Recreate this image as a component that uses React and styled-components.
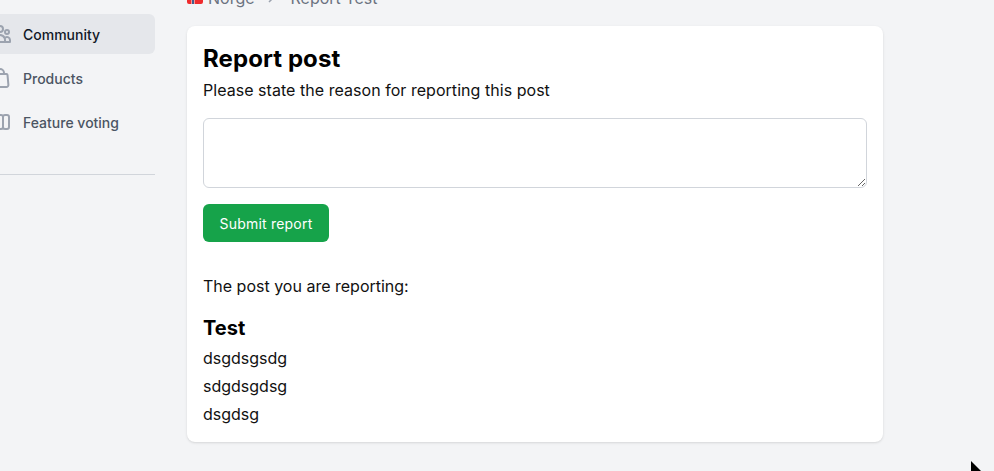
import React from 'react'
import styled, { createGlobalStyle } from 'styled-components'

const GlobalStyle = createGlobalStyle`
  html, body {
    margin: 0;
    padding: 0;
    height: 100%;
    overflow: hidden;
    background: #f3f4f6;
    font-family: Inter, "Liberation Sans", sans-serif;
  }
`

const Page = styled.div`
  display: flex;
  align-items: flex-start;
  width: 1010px;
  height: 471px;
  margin-left: -16px;
  overflow: hidden;
`

const Sidebar = styled.nav`
  flex: none;
  width: 171px;
  margin-top: 14px;
`

const NavItem = styled.a`
  display: flex;
  align-items: center;
  gap: 11px;
  height: 40px;
  padding-left: 4px;
  margin-bottom: 4px;
  box-sizing: border-box;
  border-radius: 6px;
  font-size: 14px;
  font-weight: 500;
  color: ${p => (p.$active ? '#111827' : '#4b5563')};
  background: ${p => (p.$active ? '#e5e7eb' : 'transparent')};
  svg {
    flex: none;
    width: 24px;
    height: 24px;
    fill: none;
    stroke: #9ca3af;
    stroke-width: 2;
    stroke-linecap: round;
    stroke-linejoin: round;
  }
`

const Divider = styled.div`
  height: 1px;
  margin-top: 32px;
  background: #d1d5db;
`

const Main = styled.main`
  flex: none;
  width: 696px;
  margin-left: 32px;
  margin-top: -12px;
`

const Breadcrumb = styled.div`
  display: flex;
  align-items: center;
  height: 20px;
  margin-bottom: 18px;
  font-size: 16px;
  color: #6b7280;
`

const Flag = styled.svg`
  width: 16px;
  height: 12px;
  margin-right: 5px;
  border-radius: 2px;
`

const Chevron = styled.svg`
  width: 10px;
  height: 10px;
  margin: 0 15px 0 11px;
  fill: none;
  stroke: #9ca3af;
  stroke-width: 1.5;
`

const Card = styled.section`
  box-sizing: border-box;
  height: 416px;
  padding: 17px 16px 16px;
  background: #fff;
  border-radius: 8px;
  box-shadow: 0 1px 3px rgba(0, 0, 0, 0.1), 0 1px 2px -1px rgba(0, 0, 0, 0.1);
`

const Title = styled.h1`
  margin: 0 0 1px;
  font-size: 24px;
  line-height: 32px;
  font-weight: 700;
  letter-spacing: 0.08px;
  color: #000;
`

const Text = styled.p`
  margin: 0;
  font-size: 16px;
  line-height: 28px;
  letter-spacing: ${p => p.$spacing || 0};
  color: #111;
`

const ReasonInput = styled.textarea`
  display: block;
  box-sizing: border-box;
  width: 100%;
  height: 70px;
  margin-top: 14px;
  padding: 8px 12px;
  background: #fff;
  border: 1px solid #d1d5db;
  border-radius: 6px;
  outline: none;
  font: inherit;
`

const SubmitButton = styled.button`
  display: block;
  width: 126px;
  height: 38px;
  margin: 16px 0 30px;
  padding: 0;
  border: 0;
  border-radius: 6px;
  background: #16a34a;
  color: #fff;
  font-family: inherit;
  font-size: 14px;
  font-weight: 400;
  letter-spacing: 0.2px;
`

const PostTitle = styled.h2`
  margin: 14px 0 2px;
  font-size: 20px;
  line-height: 28px;
  font-weight: 700;
  color: #000;
`

const Cursor = styled.svg`
  position: fixed;
  left: 971px;
  top: 461px;
  width: 10px;
  height: 10px;
`

const App = () => (
  <>
    <GlobalStyle />
    <Page>
      <Sidebar>
        <NavItem $active>
          <svg viewBox="0 0 24 24">
            <path d="M17 20h5v-2a3 3 0 0 0-5.356-1.857M17 20H7m10 0v-2c0-.656-.126-1.283-.356-1.857M7 20H2v-2a3 3 0 0 1 5.356-1.857M7 20v-2c0-.656.126-1.283.356-1.857m0 0a5.002 5.002 0 0 1 9.288 0M15 7a3 3 0 1 1-6 0 3 3 0 0 1 6 0zm6 3a2 2 0 1 1-4 0 2 2 0 0 1 4 0zM7 10a2 2 0 1 1-4 0 2 2 0 0 1 4 0z" />
          </svg>
          Community
        </NavItem>
        <NavItem>
          <svg viewBox="0 0 24 24">
            <path d="M16 8V7a4 4 0 0 0-8 0v1M5.5 8h13a1 1 0 0 1 1 .9l.9 10a2 2 0 0 1-2 2.1H5.6a2 2 0 0 1-2-2.1l.9-10a1 1 0 0 1 1-.9z" />
          </svg>
          Products
        </NavItem>
        <NavItem>
          <svg viewBox="0 0 24 24">
            <path d="M9 17V7m0 10a2 2 0 0 1-2 2H5a2 2 0 0 1-2-2V7a2 2 0 0 1 2-2h2a2 2 0 0 1 2 2m0 10a2 2 0 0 0 2 2h2a2 2 0 0 0 2-2M9 7a2 2 0 0 1 2-2h2a2 2 0 0 1 2 2m0 10V7m0 10a2 2 0 0 0 2 2h2a2 2 0 0 0 2-2V7a2 2 0 0 0-2-2h-2a2 2 0 0 0-2 2" />
          </svg>
          Feature voting
        </NavItem>
        <Divider />
      </Sidebar>
      <Main>
        <Breadcrumb>
          <Flag viewBox="0 0 16 12">
            <rect width="16" height="12" fill="#ef2b2d" />
            <rect x="4.5" width="3" height="12" fill="#fff" />
            <rect y="4.5" width="16" height="3" fill="#fff" />
            <rect x="5.25" width="1.5" height="12" fill="#002868" />
            <rect y="5.25" width="16" height="1.5" fill="#002868" />
          </Flag>
          Norge
          <Chevron viewBox="0 0 10 10">
            <path d="M3 1l4 4-4 4" />
          </Chevron>
          Report Test
        </Breadcrumb>
        <Card>
          <Title>Report post</Title>
          <Text $spacing="0.04px">Please state the reason for reporting this post</Text>
          <ReasonInput />
          <SubmitButton>Submit report</SubmitButton>
          <Text>The post you are reporting:</Text>
          <PostTitle>Test</PostTitle>
          <Text>dsgdsgsdg</Text>
          <Text>sdgdsgdsg</Text>
          <Text>dsgdsg</Text>
        </Card>
      </Main>
    </Page>
    <Cursor viewBox="0 0 10 10">
      <path d="M0 0L10 10H0Z" fill="#000" />
    </Cursor>
  </>
)

export default App
